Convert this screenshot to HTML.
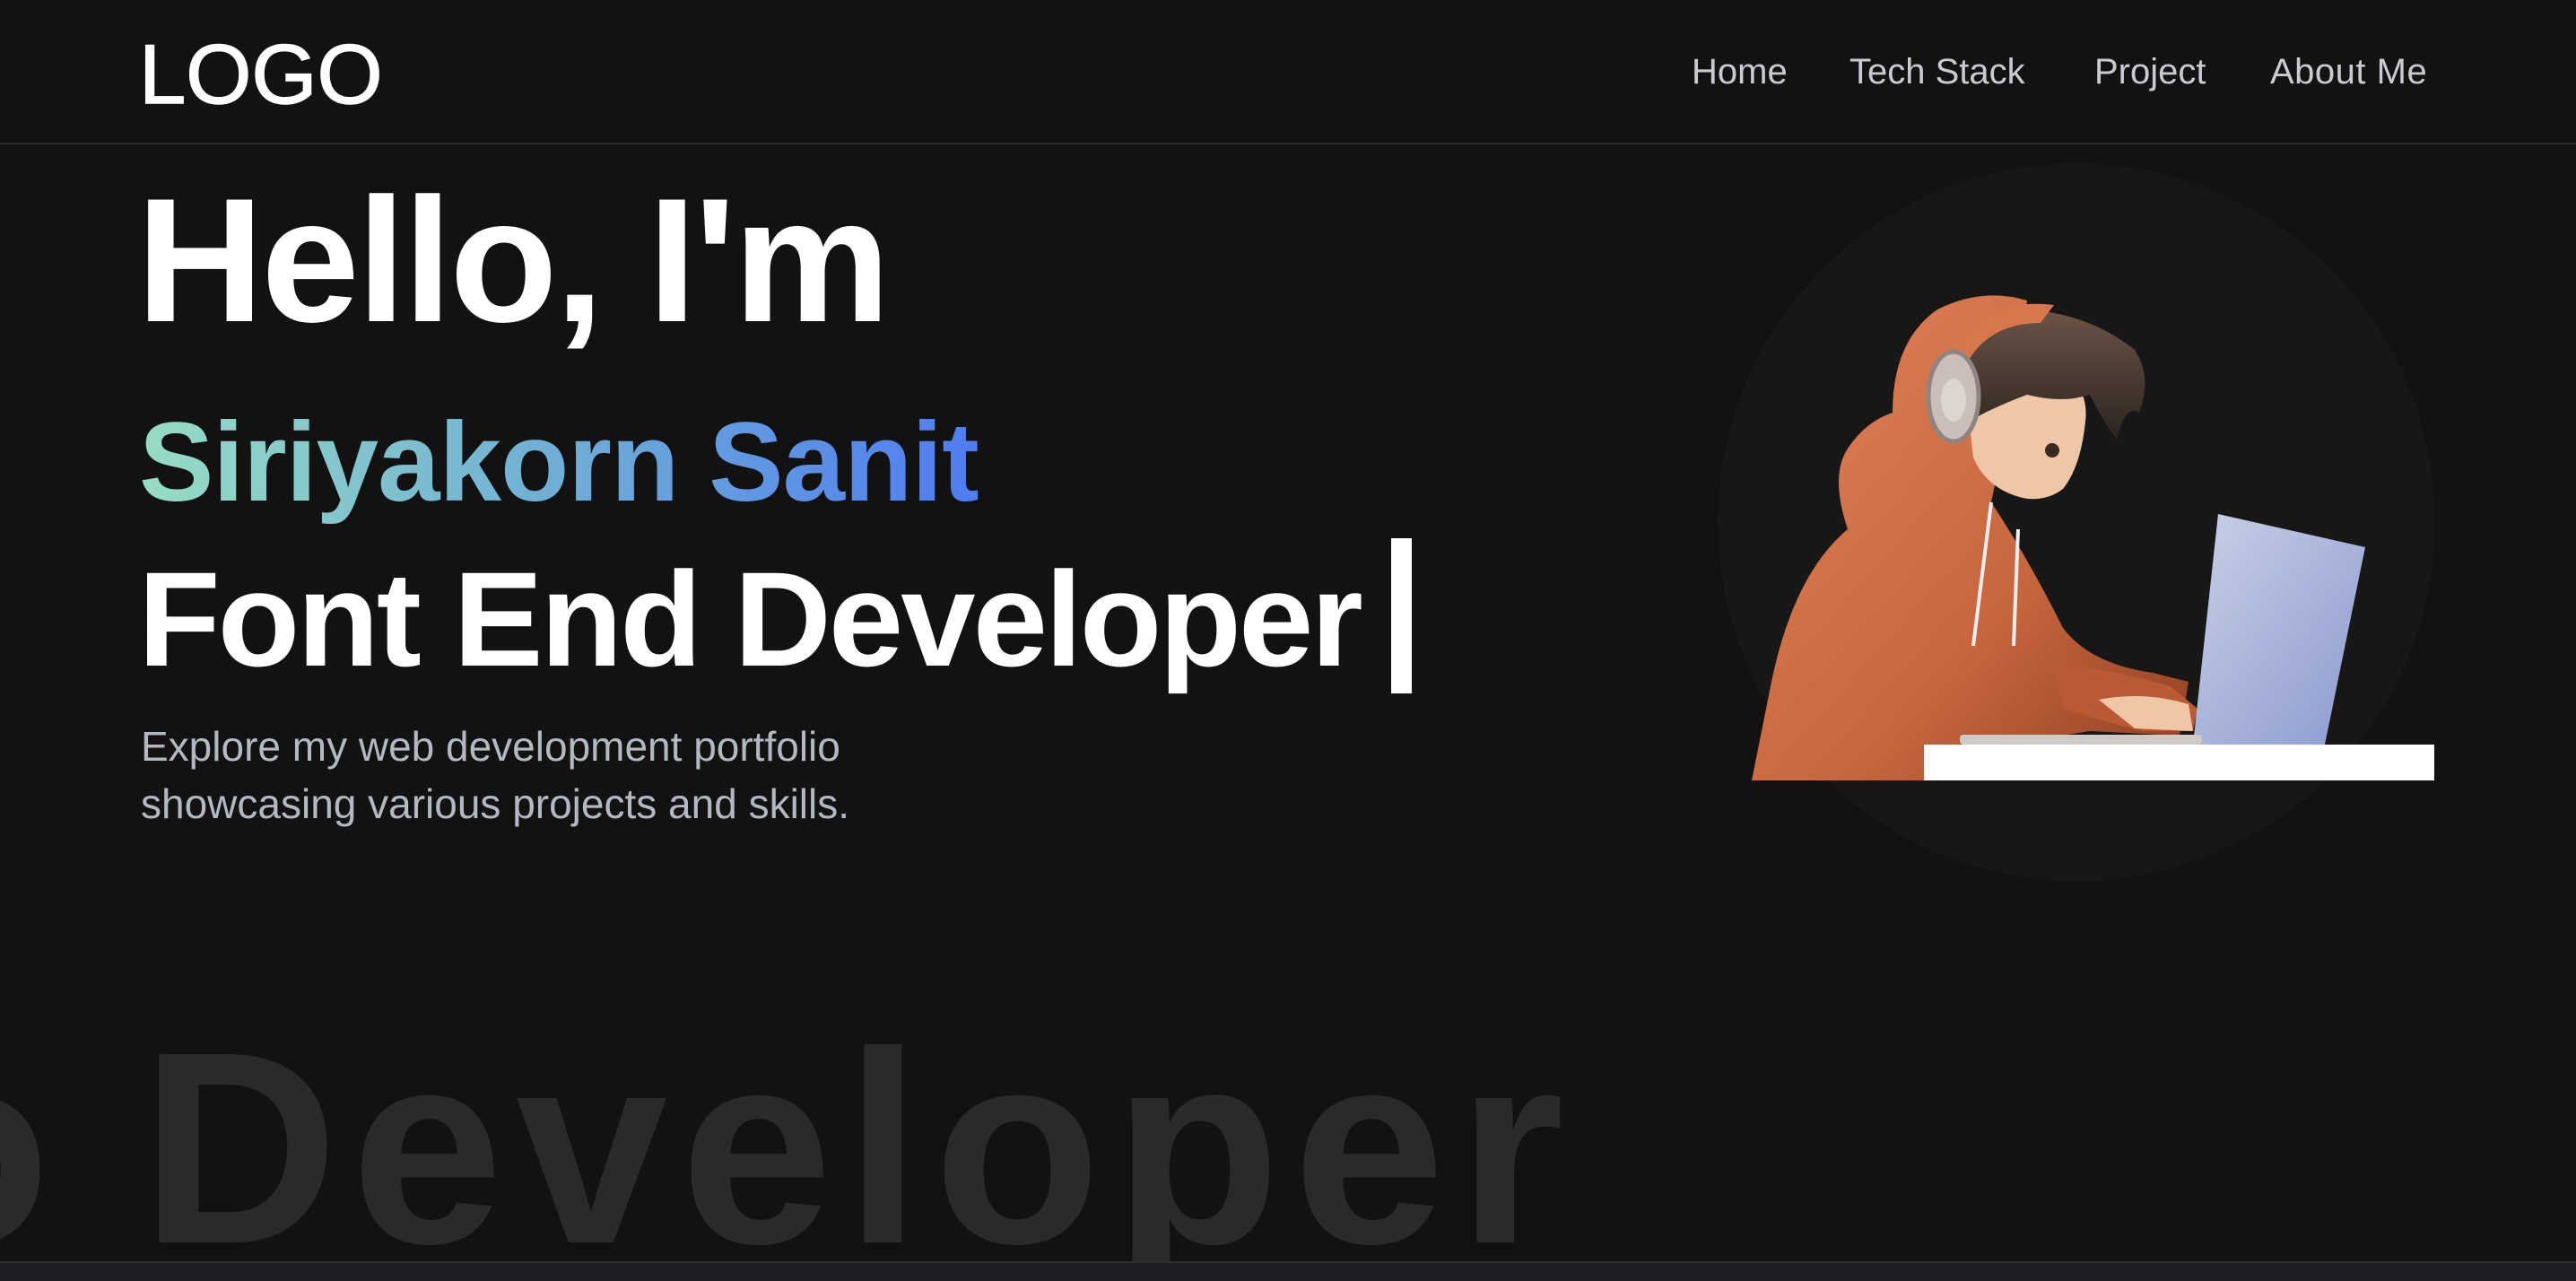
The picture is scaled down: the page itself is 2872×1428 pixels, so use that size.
<!DOCTYPE html>
<html><head><meta charset="utf-8"><style>
*{margin:0;padding:0;box-sizing:border-box}
html,body{width:2872px;height:1428px;overflow:hidden;background:#121212;font-family:"Liberation Sans",Arial,sans-serif;position:relative}
.abs{position:absolute;white-space:nowrap}
</style></head><body>
<div class="abs" style="left:0;top:159px;width:2872px;height:2px;background:#2c2c30"></div>
<div class="abs" style="left:155px;top:28px;font-size:94px;font-weight:400;color:#fff;letter-spacing:0px;line-height:110px;-webkit-text-stroke:1.5px #fff">LOGO</div>
<div class="abs" style="left:1886px;top:56px;font-size:40px;color:#c9cbd0;line-height:48px">Home</div>
<div class="abs" style="left:2062px;top:56px;font-size:40px;color:#c9cbd0;line-height:48px">Tech Stack</div>
<div class="abs" style="left:2335px;top:56px;font-size:40px;color:#c9cbd0;line-height:48px">Project</div>
<div class="abs" style="left:2531px;top:56px;font-size:40px;color:#c9cbd0;line-height:48px;letter-spacing:0.5px">About Me</div>

<div class="abs" style="left:152px;top:180px;font-size:197px;font-weight:700;color:#fff;letter-spacing:-3px;line-height:220px">Hello, I'm</div>
<div class="abs" style="left:155px;top:446px;font-size:125px;font-weight:700;line-height:140px;letter-spacing:-1px;background:linear-gradient(90deg,#97dcc4 0%,#72b3d3 45%,#4f7cf0 100%);-webkit-background-clip:text;background-clip:text;color:transparent">Siriyakorn Sanit</div>
<div class="abs" style="left:154px;top:605px;font-size:150px;font-weight:700;color:#fff;letter-spacing:-3px;line-height:170px">Font End Developer</div>
<div class="abs" style="left:1551px;top:600px;width:23px;height:173px;background:#fff"></div>
<div class="abs" style="left:157px;top:800px;font-size:46px;color:#b4b8c0;line-height:64px">Explore my web development portfolio<br>showcasing various projects and skills.</div>

<div class="abs" style="left:1915px;top:182px;width:800px;height:800px;border-radius:50%;background:#171717"></div>

<svg class="abs" style="left:0;top:0" width="2872" height="1428" viewBox="0 0 2872 1428">
<defs>
<linearGradient id="hood" x1="0" y1="0" x2="1" y2="1"><stop offset="0" stop-color="#e0825a"/><stop offset=".6" stop-color="#c8673f"/><stop offset="1" stop-color="#8e3f22"/></linearGradient>
<linearGradient id="scr" x1="0" y1="0" x2="1" y2="1"><stop offset="0" stop-color="#c9d0e6"/><stop offset="1" stop-color="#8c9ad0"/></linearGradient>
<linearGradient id="hair" x1="0" y1="0" x2="0" y2="1"><stop offset="0" stop-color="#6b5446"/><stop offset="1" stop-color="#2c2420"/></linearGradient>
</defs>
<path d="M1953 870 L1975 760 Q2000 640 2060 590 Q2040 530 2060 500 Q2080 470 2110 460 Q2110 380 2160 345 Q2210 320 2260 335 L2250 420 L2220 560 Q2260 620 2300 700 Q2330 740 2400 750 L2440 760 L2430 820 L2330 815 Q2240 830 2180 830 L2145 830 L2145 870 Z" fill="url(#hood)"/>
<path d="M2190 420 Q2230 380 2290 400 Q2330 430 2325 470 Q2320 520 2300 545 Q2280 560 2255 555 Q2215 545 2200 510 Z" fill="#f0c7a6"/>
<path d="M2180 400 Q2200 350 2260 345 Q2330 350 2380 390 Q2400 420 2385 460 Q2370 450 2360 490 Q2345 470 2330 440 Q2300 450 2260 440 Q2220 455 2195 470 Z" fill="url(#hair)"/>
<path d="M2170 400 Q2210 330 2290 340 L2275 360 Q2215 360 2190 410 Z" fill="#d8774c"/>
<ellipse cx="2178" cy="442" rx="28" ry="50" fill="#c9bfb8" stroke="#8e8580" stroke-width="5"/>
<ellipse cx="2178" cy="446" rx="14" ry="24" fill="#ddd5cf"/>
<circle cx="2288" cy="502" r="8" fill="#3a2a22"/>
<path d="M2220 560 L2200 720 M2250 590 L2245 720" stroke="#eee" stroke-width="4" fill="none"/>
<path d="M2290 740 Q2350 745 2420 765 L2450 790 L2445 815 L2390 815 Q2330 800 2300 790 Z" fill="#b85b35"/>
<path d="M2340 780 Q2390 770 2440 785 L2445 815 L2380 812 Z" fill="#f0c7a6"/>
<polygon points="2473,573 2637,610 2592,830 2445,830" fill="url(#scr)"/>
<rect x="2185" y="819" width="270" height="11" rx="4" fill="#cfcac6"/>
<rect x="2145" y="830" width="569" height="40" fill="#fff"/>
</svg>

<div class="abs" style="left:0;top:0;width:2872px;height:1406px;overflow:hidden">
  <div class="abs" style="left:157px;top:1090px;font-size:305px;font-weight:700;color:#2a2a2a;line-height:380px;letter-spacing:14px">Developer</div>
  <div class="abs" style="left:-130px;top:1090px;font-size:305px;font-weight:700;color:#2a2a2a;line-height:380px">o</div>
</div>
<div class="abs" style="left:0;top:1406px;width:2872px;height:2px;background:#2e2f34"></div>
<div class="abs" style="left:0;top:1408px;width:2872px;height:20px;background:#1e1f23"></div>
</body></html>
